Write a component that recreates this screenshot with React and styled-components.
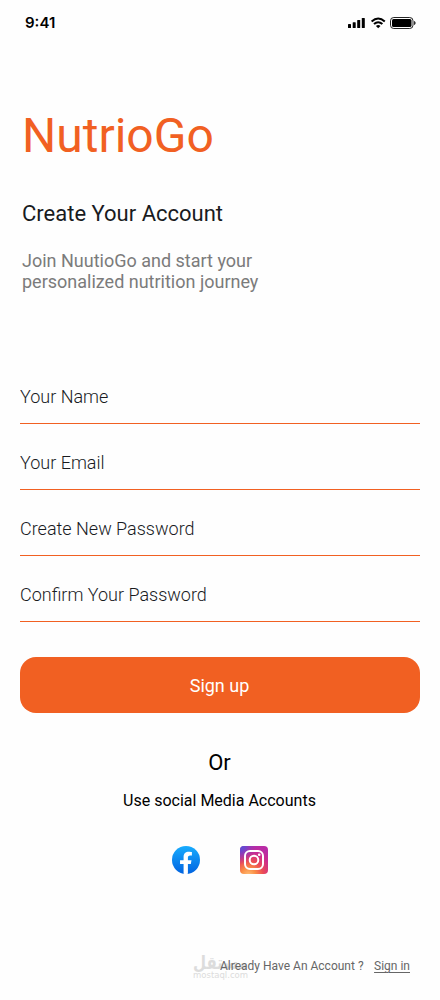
import React from 'react'
import styled, { createGlobalStyle } from 'styled-components'

const GlobalStyle = createGlobalStyle`
  * {
    box-sizing: border-box;
    margin: 0;
    padding: 0;
  }

  body {
    background: #fefefe;
    font-family: Roboto, sans-serif;
  }
`

const Screen = styled.main`
  display: flex;
  flex-direction: column;
  width: 440px;
  height: 1000px;
  overflow: hidden;
  background: #fefefe;
`

const StatusBar = styled.div`
  display: flex;
  align-items: center;
  justify-content: space-between;
  height: 46px;
  padding: 0 24px 0 25px;
`

const Time = styled.span`
  font: 600 15px/18px Inter, sans-serif;
  color: #000;
`

const Header = styled.header`
  height: 331px;
  padding: 62px 22px 0;
`

const Brand = styled.h1`
  font-size: 48px;
  font-weight: 400;
  line-height: 56px;
  color: #f16022;
`

const Title = styled.h2`
  margin-top: 37px;
  font-size: 22px;
  font-weight: 400;
  line-height: 26px;
  color: #191b1e;
`

const Intro = styled.p`
  margin-top: 23px;
  font-size: 18px;
  line-height: 21px;
  color: #7b7b7b;
`

const Form = styled.form`
  display: flex;
  flex-direction: column;
  padding: 0 20px;
`

const Field = styled.input`
  height: 47px;
  margin-bottom: 19px;
  padding: 0 0 7px;
  border: 0;
  border-bottom: 1px solid #f16022;
  border-radius: 0;
  outline: none;
  background: transparent;
  font: 300 18px/21px Roboto, sans-serif;
  color: #191b1e;

  &::placeholder {
    color: #191b1e;
    opacity: 1;
  }
`

const SubmitButton = styled.button`
  height: 56px;
  margin-top: 16px;
  padding-right: 1px;
  border: 0;
  border-radius: 16px;
  background: #f16022;
  font: 400 18px/21px Roboto, sans-serif;
  color: #fff;
  cursor: pointer;
`

const Social = styled.section`
  display: flex;
  flex-direction: column;
  align-items: center;
  padding-top: 37px;
`

const Or = styled.p`
  padding-right: 1px;
  font-size: 22px;
  line-height: 26px;
  color: #000;
`

const SocialText = styled.p`
  margin-top: 15px;
  padding-right: 1px;
  font-size: 16px;
  line-height: 19px;
  color: #000;
`

const SocialIcons = styled.div`
  display: flex;
  gap: 40px;
  margin-top: 36px;

  svg {
    display: block;
  }
`

const Footer = styled.footer`
  position: relative;
  display: flex;
  justify-content: flex-end;
  gap: 10.5px;
  margin-top: 85px;
  padding-right: 30px;
  font-size: 12px;
  line-height: 14px;
  color: #666;

  a {
    color: inherit;
    text-underline-offset: 1.5px;
  }
`

const FooterText = styled.span`
  position: relative;
`

const Watermark = styled.div`
  position: absolute;
  top: -2px;
  left: 193px;
  color: #dcdcdc;
  white-space: nowrap;
`

const WatermarkName = styled.div`
  height: 13px;
  font: 700 15px/13px 'DejaVu Sans', sans-serif;
  transform: scaleY(1.2);
`

const WatermarkSite = styled.div`
  font: 400 8.5px/10px 'DejaVu Sans', sans-serif;
`

const StatusIcons = () => (
  <svg width="68" height="14" viewBox="0 0 68 14">
    <rect x="0" y="8" width="3" height="4" rx=".6" />
    <rect x="4.7" y="6.2" width="3" height="5.8" rx=".6" />
    <rect x="9.2" y="4" width="3" height="8" rx=".6" />
    <rect x="13.8" y="2" width="3" height="10" rx=".6" />
    <g fill="none" stroke="#000" strokeWidth="2">
      <path d="M23.6 5.6Q30.2-.5 36.8 5.6" />
      <path d="M26 8.1Q30.2 4.3 34.4 8.1" />
    </g>
    <path d="M30.2 12.2l-2.3-2.3q2.3-1.9 4.6 0z" />
    <rect x="42.5" y="1.5" width="22.5" height="11" rx="3.3" fill="none" stroke="#000" strokeOpacity=".85" />
    <rect x="44" y="3" width="19.5" height="8" rx="1.5" />
    <path d="M66.2 5v4c.8-.3 1.300-1.100 1.300-2s-.5-1.700-1.300-2z" />
  </svg>
)

const FacebookIcon = () => (
  <svg width="28" height="28" viewBox="0 0 28 28">
    <defs>
      <linearGradient id="fb" x1="0" y1="0" x2="0" y2="1">
        <stop offset="0" stopColor="#18acfe" />
        <stop offset="1" stopColor="#0163e0" />
      </linearGradient>
    </defs>
    <circle cx="14" cy="14" r="14" fill="url(#fb)" />
    <path
      d="M18.85 18.1L19.47 14.16H15.9V11.6C15.9 10.52 16.44 9.47 18.15 9.47H19.9V6.11C19.9 6.11 18.32 5.85 16.8 5.85C13.64 5.85 11.58 7.73 11.58 11.13V14.16H8.05V18.1H11.58V27.8A14 14 0 0 0 15.9 27.87V18.1Z"
      fill="#fff"
    />
  </svg>
)

const InstagramIcon = () => (
  <svg width="28" height="28" viewBox="0 0 28 28">
    <defs>
      <radialGradient id="igBase" cx=".3" cy="1.05" r="1.05">
        <stop offset="0" stopColor="#ffc078" />
        <stop offset=".25" stopColor="#fa8e45" />
        <stop offset=".5" stopColor="#ec4c54" />
        <stop offset=".8" stopColor="#ca2b91" />
        <stop offset="1" stopColor="#b92ba5" />
      </radialGradient>
      <radialGradient id="igBlue" cx="0" cy="0" r=".65">
        <stop offset="0" stopColor="#4d55dc" />
        <stop offset=".3" stopColor="#6848d0" stopOpacity=".9" />
        <stop offset="1" stopColor="#a52fb0" stopOpacity="0" />
      </radialGradient>
    </defs>
    <rect width="28" height="28" rx="4" fill="url(#igBase)" />
    <rect width="28" height="28" rx="4" fill="url(#igBlue)" />
    <rect x="5" y="5" width="18" height="18" rx="5" fill="none" stroke="#fff" strokeWidth="2" />
    <circle cx="14" cy="14" r="4.3" fill="none" stroke="#fff" strokeWidth="2" />
    <circle cx="19.2" cy="8.8" r="1.3" fill="#fff" />
  </svg>
)

const fields = [
  { name: 'name', type: 'text', label: 'Your Name' },
  { name: 'email', type: 'email', label: 'Your Email' },
  { name: 'password', type: 'password', label: 'Create New Password' },
  { name: 'confirm', type: 'password', label: 'Confirm Your Password' },
]

export default function App() {
  return (
    <>
      <GlobalStyle />
      <Screen>
        <StatusBar>
          <Time>9:41</Time>
          <StatusIcons />
        </StatusBar>

        <Header>
          <Brand>NutrioGo</Brand>
          <Title>Create Your Account</Title>
          <Intro>
            Join NuutioGo and start your
            <br />
            personalized nutrition journey
          </Intro>
        </Header>

        <Form onSubmit={(e) => e.preventDefault()}>
          {fields.map(({ name, type, label }) => (
            <Field key={name} name={name} type={type} placeholder={label} autoComplete="off" />
          ))}
          <SubmitButton type="submit">Sign up</SubmitButton>
        </Form>

        <Social>
          <Or>Or</Or>
          <SocialText>Use social Media Accounts</SocialText>
          <SocialIcons>
            <FacebookIcon />
            <InstagramIcon />
          </SocialIcons>
        </Social>

        <Footer>
          <Watermark>
            <WatermarkName lang="ar">مستقل</WatermarkName>
            <WatermarkSite>mostaql.com</WatermarkSite>
          </Watermark>
          <FooterText>Already Have An Account ?</FooterText>
          <a href="#signin">Sign in</a>
        </Footer>
      </Screen>
    </>
  )
}
